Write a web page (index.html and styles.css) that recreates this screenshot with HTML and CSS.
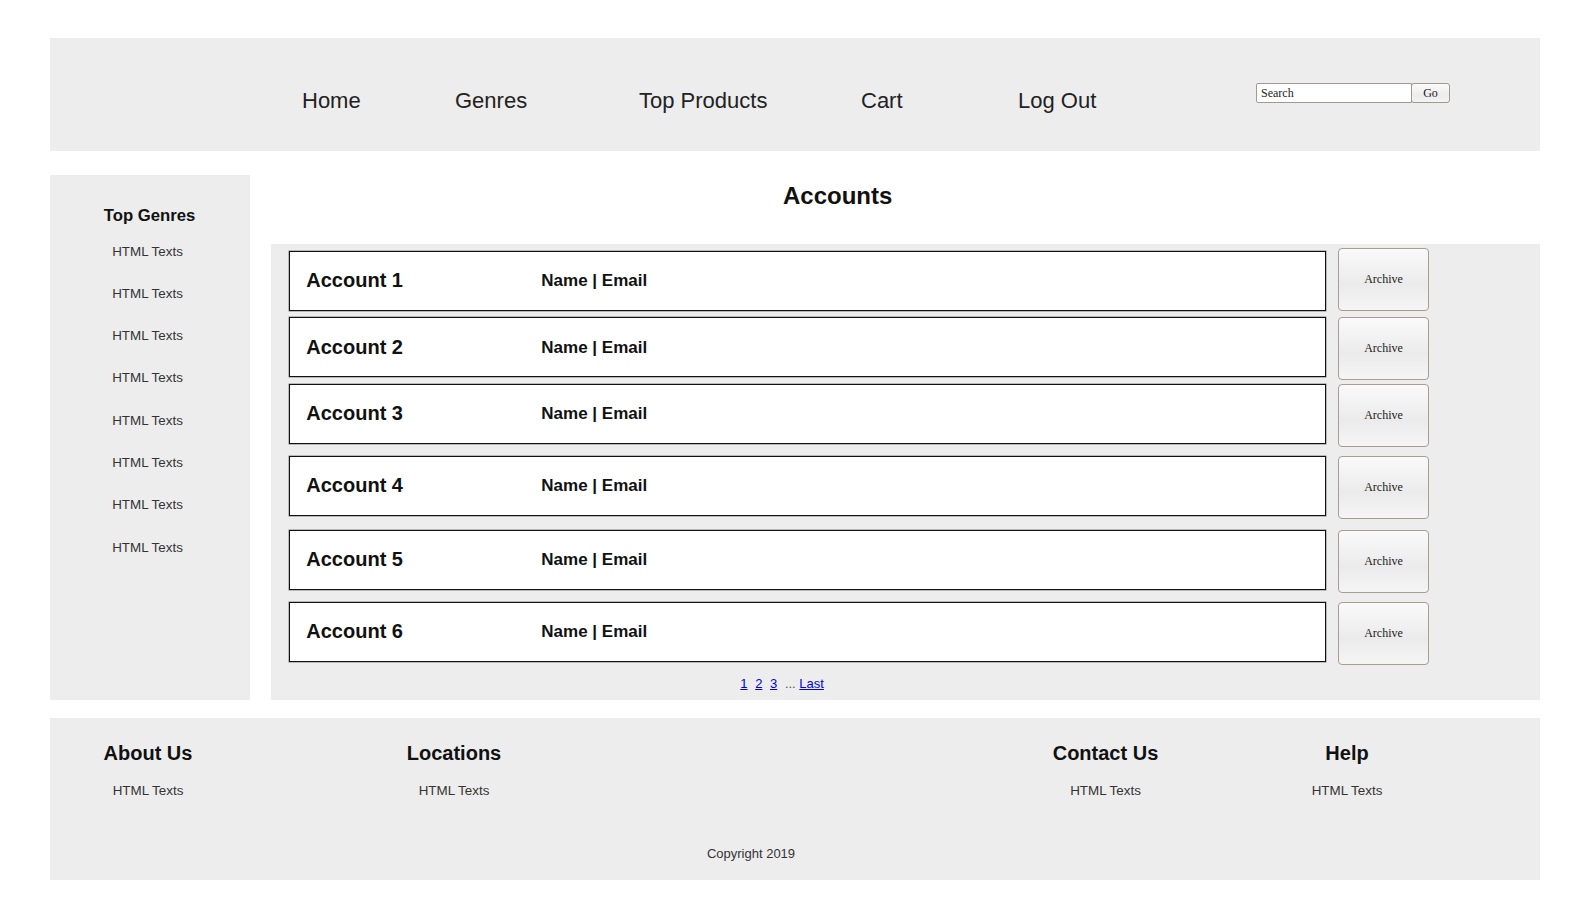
FILE: index.html
```html
<!DOCTYPE html>
<html lang="en">
<head>
<meta charset="utf-8">
<title>Accounts</title>
<link rel="stylesheet" href="styles.css">
</head>
<body>
<div class="page">
  <header class="topbar">
    <nav>
      <ul class="nav">
        <li>Home</li>
        <li>Genres</li>
        <li>Top Products</li>
        <li>Cart</li>
        <li>Log Out</li>
      </ul>
    </nav>
    <form class="search">
      <input class="search-input" type="text" value="Search">
      <button class="search-btn" type="button">Go</button>
    </form>
  </header>

  <div class="middle">
    <aside class="sidebar">
      <h3>Top Genres</h3>
      <ul>
        <li>HTML Texts</li>
        <li>HTML Texts</li>
        <li>HTML Texts</li>
        <li>HTML Texts</li>
        <li>HTML Texts</li>
        <li>HTML Texts</li>
        <li>HTML Texts</li>
        <li>HTML Texts</li>
      </ul>
    </aside>

    <main class="main">
      <h2>Accounts</h2>
      <section class="accounts">
        <div class="acct-row">
          <div class="acct-box"><span class="acct-name">Account 1</span><span class="acct-meta">Name | Email</span></div>
          <button class="archive" type="button">Archive</button>
        </div>
        <div class="acct-row">
          <div class="acct-box"><span class="acct-name">Account 2</span><span class="acct-meta">Name | Email</span></div>
          <button class="archive" type="button">Archive</button>
        </div>
        <div class="acct-row">
          <div class="acct-box"><span class="acct-name">Account 3</span><span class="acct-meta">Name | Email</span></div>
          <button class="archive" type="button">Archive</button>
        </div>
        <div class="acct-row">
          <div class="acct-box"><span class="acct-name">Account 4</span><span class="acct-meta">Name | Email</span></div>
          <button class="archive" type="button">Archive</button>
        </div>
        <div class="acct-row">
          <div class="acct-box"><span class="acct-name">Account 5</span><span class="acct-meta">Name | Email</span></div>
          <button class="archive" type="button">Archive</button>
        </div>
        <div class="acct-row">
          <div class="acct-box"><span class="acct-name">Account 6</span><span class="acct-meta">Name | Email</span></div>
          <button class="archive" type="button">Archive</button>
        </div>
        <div class="pager"><a href="#">1</a> <a href="#">2</a> <a href="#">3</a> <span class="dots">...</span> <a href="#">Last</a></div>
      </section>
    </main>
  </div>

  <footer class="footer">
    <div class="fcols">
      <div class="fcol about"><h4>About Us</h4><p>HTML Texts</p></div>
      <div class="fcol locations"><h4>Locations</h4><p>HTML Texts</p></div>
      <div class="fcol contact"><h4>Contact Us</h4><p>HTML Texts</p></div>
      <div class="fcol help"><h4>Help</h4><p>HTML Texts</p></div>
    </div>
    <p class="copyright">Copyright 2019</p>
  </footer>
</div>
</body>
</html>
```

FILE: styles.css
```css
body {
  margin: 0;
  font-family: "Liberation Sans", Arial, sans-serif;
  color: #111;
  background: #fff;
}

.page {
  width: 1490px;
  margin: 38px 50px 0;
}

/* ---------- header ---------- */
.topbar {
  height: 113px;
  background: #ededed;
  display: flex;
  align-items: flex-start;
}

.nav {
  list-style: none;
  margin: 50px 0 0 252px;
  padding: 0;
  display: flex;
  font-size: 22px;
  line-height: 26px;
  color: #222;
}

.nav li:nth-child(1) { width: 153px; }
.nav li:nth-child(2) { width: 184px; }
.nav li:nth-child(3) { width: 222px; }
.nav li:nth-child(4) { width: 157px; }

.search {
  margin: 45px 90px 0 auto;
  display: flex;
}

.search-input {
  width: 156px;
  height: 20px;
  box-sizing: border-box;
  border: 1px solid #a39a8e;
  border-radius: 2px 0 0 2px;
  background: #fff;
  padding: 0 4px;
  font: 12px "Liberation Serif", "Times New Roman", serif;
  color: #222;
  outline: none;
}

.search-btn {
  width: 39px;
  height: 20px;
  box-sizing: border-box;
  margin-left: -1px;
  border: 1px solid #a39a8e;
  border-radius: 3px;
  background: linear-gradient(#fbfbfb, #ececec 60%, #f4f4f4);
  padding: 0;
  font: 12px "Liberation Serif", "Times New Roman", serif;
  color: #222;
}

/* ---------- middle ---------- */
.middle {
  display: flex;
  gap: 21px;
  margin-top: 24px;
  height: 525px;
}

.sidebar {
  width: 200px;
  flex: none;
  background: #ededed;
  text-align: center;
}

.sidebar h3 {
  margin: 31px 0 0;
  padding-right: 1px;
  font-size: 16.7px;
  line-height: 20px;
  font-weight: bold;
  color: #111;
}

.sidebar ul {
  list-style: none;
  margin: 4.6px 0 0;
  padding: 0 5px 0 0;
  font-size: 13.4px;
  line-height: 42.3px;
  color: #333;
}

.main {
  flex: 1;
  display: flex;
  flex-direction: column;
}

.main h2 {
  margin: 0;
  height: 69px;
  box-sizing: border-box;
  padding: 7px 0 0 512px;
  font-size: 24px;
  line-height: 28px;
  font-weight: bold;
  color: #111;
}

.accounts {
  flex: 1;
  background: #ededed;
  padding: 6.7px 0 0 18.3px;
}

.acct-row {
  display: flex;
  align-items: flex-start;
  gap: 12.6px;
  height: 63px;
}

.acct-row:nth-child(2) { margin-top: 3.6px; }
.acct-row:nth-child(3) { margin-top: 3.5px; }
.acct-row:nth-child(4) { margin-top: 9px; }
.acct-row:nth-child(5) { margin-top: 11px; }
.acct-row:nth-child(6) { margin-top: 9px; }

.acct-row:first-child .archive { margin-top: -2.4px; }

.acct-box {
  width: 1036.4px;
  height: 60px;
  box-sizing: border-box;
  border: 1px solid #111;
  box-shadow: 0 0 0 0.5px rgba(0, 0, 0, 0.45);
  background: #fff;
  display: flex;
  align-items: center;
  padding: 0 0 0 16px;
}

.acct-name {
  width: 235px;
  font-size: 20px;
  font-weight: bold;
  color: #111;
}

.acct-meta {
  font-size: 17px;
  font-weight: bold;
  color: #111;
  padding-top: 1px;
}

.acct-row:first-child .acct-meta { padding-top: 0; }

.archive {
  width: 90.4px;
  height: 63px;
  box-sizing: border-box;
  border: 1px solid #a89d8f;
  border-radius: 4px;
  background: linear-gradient(#fafafa, #ebebeb 58%, #f5f5f5);
  padding: 0;
  font: 12px "Liberation Serif", "Times New Roman", serif;
  color: #222;
}

.pager {
  margin-top: 11.5px;
  padding-left: 451px;
  font-size: 13px;
  line-height: 16px;
  color: #555;
}

.pager a {
  color: #0000ee;
  text-decoration: underline;
  margin-right: 4px;
}

.pager a:last-child { margin-right: 0; }

/* ---------- footer ---------- */
.footer {
  margin-top: 18px;
  height: 162px;
  background: #ededed;
  overflow: hidden;
}

.fcols {
  display: flex;
  padding-top: 23.4px;
}

.fcol {
  text-align: center;
}

.fcol.about { width: 196px; }
.fcol.locations { width: 416px; }
.fcol.contact { width: 201px; margin-left: 343px; }
.fcol.help { width: 282px; }

.fcol h4 {
  margin: 0;
  font-size: 20px;
  line-height: 24px;
  font-weight: bold;
  color: #111;
}

.fcol p {
  margin: 17.6px 0 0;
  font-size: 13.4px;
  line-height: 16px;
  color: #333;
}

.copyright {
  margin: 47px 0 0;
  padding-right: 88px;
  text-align: center;
  font-size: 13px;
  line-height: 16px;
  color: #333;
}
```
